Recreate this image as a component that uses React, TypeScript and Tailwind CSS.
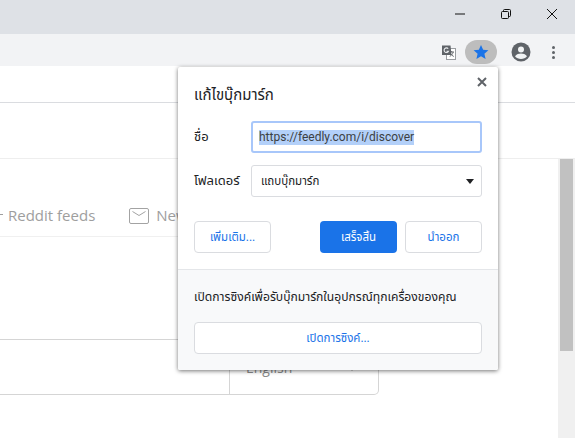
import React from "react";

const ui = "font-['Noto_Sans','Noto_Sans_Thai','Open_Sans',sans-serif]";

const StarIcon = () => (
  <svg width="16" height="16" viewBox="0 0 24 24" fill="#1a73e8">
    <path d="M12 1.5l3.2 7.3 7.9.7-6 5.2 1.8 7.8L12 18.3l-6.9 4.2 1.8-7.8-6-5.2 7.9-.7z" />
  </svg>
);

const TranslateIcon = () => (
  <svg width="14" height="15" viewBox="0 0 14 15">
    <rect x="4.500" y="3.500" width="9" height="11" fill="#fff" stroke="#9a9da1" strokeWidth="1" />
    <path d="M7.500 7h4.500M9.700 6v1M11.200 7c-.5 2-1.800 3.500-3.500 4.500M8.500 8.500c.7 1.300 1.900 2.400 3.300 3" stroke="#5f6368" strokeWidth="0.900" fill="none" />
    <path d="M0 0.500h8.500l1 9.500H0z" fill="#5f6368" />
    <path d="M6.200 3.700A2.300 2.300 0 1 0 6.500 6.200H4.500" fill="none" stroke="#e8eaed" strokeWidth="1.100" />
  </svg>
);

const AccountIcon = () => (
  <svg width="20" height="20" viewBox="0 0 20 20">
    <circle cx="10" cy="10" r="9.500" fill="#5f6368" />
    <circle cx="10" cy="7.500" r="3" fill="#f1f3f4" />
    <path d="M4 14.200c1.300-2 4-2.700 6-2.700s4.700.7 6 2.700c-1.400 1.700-3.600 2.800-6 2.800s-4.600-1.100-6-2.800z" fill="#f1f3f4" />
  </svg>
);

const MailIcon = () => (
  <svg width="20" height="16" viewBox="0 0 20 16" fill="none" stroke="#a3a3a3" strokeWidth="1">
    <rect x="0.500" y="0.500" width="19" height="15" rx="1.500" />
    <path d="M3.500 3.500L10 7.500l6.500-4" />
  </svg>
);

const WindowControls = () => (
  <div className="flex h-[34px] items-start justify-end bg-[#dee1e6]">
    <button className="flex h-7 w-[46px] items-center justify-center">
      <svg width="10" height="10" viewBox="0 0 10 10"><path d="M0 5h10" stroke="#111" strokeWidth="1" /></svg>
    </button>
    <button className="flex h-7 w-[46px] items-center justify-center">
      <svg width="10" height="10" viewBox="0 0 10 10" fill="none" stroke="#111" strokeWidth="1">
        <rect x="0.500" y="2.500" width="7" height="7" rx="1" />
        <path d="M2.500 2.500V1.500a1 1 0 0 1 1-1h5a1 1 0 0 1 1 1v5a1 1 0 0 1-1 1h-1" />
      </svg>
    </button>
    <button className="flex h-7 w-[46px] items-center justify-center">
      <svg width="10" height="10" viewBox="0 0 10 10"><path d="M0 0l10 10M10 0L0 10" stroke="#111" strokeWidth="1" /></svg>
    </button>
  </div>
);

const Toolbar = () => (
  <div className="flex h-8 items-center justify-end bg-[#f2f3f5] pt-1">
    <TranslateIcon />
    <div className="ml-[9px] flex h-6 w-8 items-center justify-center rounded-full bg-[#bdbdbd]">
      <StarIcon />
    </div>
    <div className="ml-[14px]"><AccountIcon /></div>
    <div className="ml-[21px] mr-[20px] flex flex-col gap-[2px]">
      <span className="h-[3px] w-[3px] rounded-full bg-[#5f6368]" />
      <span className="h-[3px] w-[3px] rounded-full bg-[#5f6368]" />
      <span className="h-[3px] w-[3px] rounded-full bg-[#5f6368]" />
    </div>
  </div>
);

const PageBehind = () => (
  <div className="flex flex-1 flex-col bg-white font-['Open_Sans',sans-serif]">
    <div className="h-[37px] border-b border-[#dadce0]" />
    <div className="h-[56px] border-b border-[#eeeeee]" />
    <div className="flex flex-1">
      <div className="flex-1">
        <div className="w-[378px] h-[78px] flex items-end border-b border-[#f0f0f0] pb-[10px] overflow-hidden text-[15px] leading-[22px] text-[#9e9e9e] whitespace-nowrap">
          <span className="ml-[-3px] mb-[11px] h-px w-[6px] bg-[#9e9e9e]" />
          <span className="ml-[5px]">Reddit feeds</span>
          <span className="ml-[34px] mb-[2px]"><MailIcon /></span>
          <span className="ml-[7px]">Newsletters</span>
        </div>
        <div className="mt-[102px] flex h-[56px] w-[379px] rounded-br-[5px] border-y border-r border-[#d5d5d5]">
          <div className="ml-[229px] flex flex-1 items-start justify-between border-l border-[#d5d5d5] pl-4 pr-6 pt-[18px] text-[14px] leading-5 text-[#8a8a8a]">
            <span>English</span>
            <span className="mt-[11px] h-0 w-0 border-x-[2px] border-t-[2px] border-x-transparent border-t-[#b0b0b0]" />
          </div>
        </div>
      </div>
      <div className="w-[17px] bg-[#f0f0f0] pl-[2px] pr-[2px]">
        <div className="h-[192px] w-[13px] bg-[#c1c1c1]" />
      </div>
    </div>
  </div>
);

const Popup = () => (
  <div className={`absolute left-[178px] top-[67px] flex h-[303px] w-[320px] flex-col rounded-[2px] bg-white text-[13px] text-[#202124] shadow-[0_1px_4px_rgba(0,0,0,0.55)] ${ui}`}>
    <button className="absolute right-[11px] top-[10px]">
      <svg width="10" height="10" viewBox="0 0 10 10"><path d="M1 1l8 8M9 1L1 9" stroke="#5f6368" strokeWidth="2" /></svg>
    </button>
    <div className="flex-1 px-4">
      <h2 className="mt-[16px] h-[22px] text-[15px] leading-[22px] font-normal">แก้ไขบุ๊กมาร์ก</h2>
      <div className="mt-[16px] flex items-center">
        <label className="w-[57px] text-[13px]">ชื่อ</label>
        <div className="flex h-8 flex-1 items-center rounded-[3px] border-2 border-[#a8c7fa] pl-[6px] font-['Roboto',sans-serif] text-[12px] text-[#3c4043]">
          <span className="bg-[#b3d0f9] leading-[15px]">https://feedly.com/i/discover</span>
        </div>
      </div>
      <div className="mt-3 flex items-center">
        <label className="w-[57px] text-[13px]">โฟลเดอร์</label>
        <div className="flex h-8 flex-1 items-center justify-between rounded-[3px] border border-[#dadce0] pl-[9px] pr-[7px] text-[11.5px]">
          <span>แถบบุ๊กมาร์ก</span>
          <span className="h-0 w-0 border-x-[4px] border-t-[5px] border-x-transparent border-t-[#202124]" />
        </div>
      </div>
      <div className="mt-6 flex text-[11.5px]">
        <button className="h-8 w-[77px] rounded-[4px] border border-[#dadce0] text-[#1a73e8]">เพิ่มเติม...</button>
        <button className="ml-[49px] h-8 w-[77px] rounded-[4px] bg-[#1a73e8] text-white">เสร็จสิ้น</button>
        <button className="ml-2 h-8 w-[77px] rounded-[4px] border border-[#dadce0] text-[#1a73e8]">นำออก</button>
      </div>
    </div>
    <div className="h-[101px] rounded-b-[2px] border-t border-[#e4e6e9] bg-[#f8f9fa] px-4 pt-[18px]">
      <p className="h-[18px] text-[12.15px] leading-[18px]">เปิดการซิงค์เพื่อรับบุ๊กมาร์กในอุปกรณ์ทุกเครื่องของคุณ</p>
      <button className="mt-[16px] h-8 w-full rounded-[4px] border border-[#dadce0] bg-white text-[11.5px] text-[#1a73e8]">เปิดการซิงค์...</button>
    </div>
  </div>
);

export default function App() {
  return (
    <div className="relative flex h-[438px] w-[575px] flex-col overflow-hidden">
      <WindowControls />
      <Toolbar />
      <PageBehind />
      <Popup />
    </div>
  );
}
